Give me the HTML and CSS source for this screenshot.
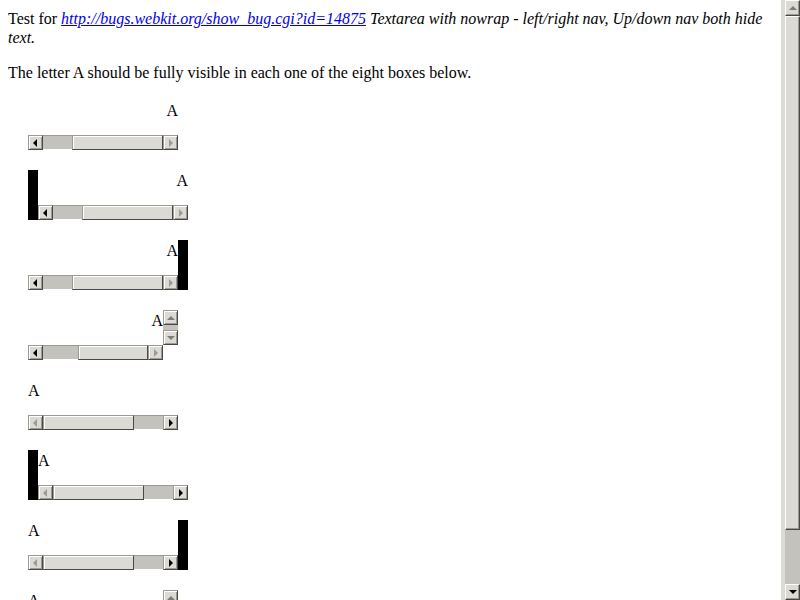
FILE: index.html
```html
<!DOCTYPE html>
<html>
<head>
<meta charset="utf-8">
<link rel="stylesheet" href="styles.css">
</head>
<body>
<p class="intro">Test for <em><a href="#">http://bugs.webkit.org/show_bug.cgi?id=14875</a> Textarea with nowrap - left/right nav, Up/down nav both hide text.</em></p>
<p>The letter A should be fully visible in each one of the eight boxes below.</p>

<div class="boxes">
  <div class="ta">
    <div class="txt end">A</div>
    <div class="hbar"><span class="btn"><span class="arr al"></span></span><span class="track"><span class="gap" style="flex:0 0 29px"></span><span class="thumb"></span></span><span class="btn"><span class="arr ar dis"></span></span></div>
  </div>

  <div class="ta bl">
    <div class="txt end">A</div>
    <div class="hbar"><span class="btn"><span class="arr al"></span></span><span class="track"><span class="gap" style="flex:0 0 29px"></span><span class="thumb"></span></span><span class="btn"><span class="arr ar dis"></span></span></div>
  </div>

  <div class="ta br">
    <div class="txt end">A</div>
    <div class="hbar"><span class="btn"><span class="arr al"></span></span><span class="track"><span class="gap" style="flex:0 0 29px"></span><span class="thumb"></span></span><span class="btn"><span class="arr ar dis"></span></span></div>
  </div>

  <div class="ta grid">
    <div class="txt end">A</div>
    <div class="vbar"><span class="btn"><span class="arr au"></span></span><span class="vtrack"></span><span class="btn"><span class="arr ad"></span></span></div>
    <div class="hbar"><span class="btn"><span class="arr al"></span></span><span class="track"><span class="gap" style="flex:0 0 35px"></span><span class="thumb"></span></span><span class="btn"><span class="arr ar dis"></span></span></div>
    <div class="corner"></div>
  </div>

  <div class="ta">
    <div class="txt">A</div>
    <div class="hbar"><span class="btn"><span class="arr al dis"></span></span><span class="track"><span class="thumb"></span><span class="gap" style="flex:0 0 29px"></span></span><span class="btn"><span class="arr ar"></span></span></div>
  </div>

  <div class="ta bl">
    <div class="txt">A</div>
    <div class="hbar"><span class="btn"><span class="arr al dis"></span></span><span class="track"><span class="thumb"></span><span class="gap" style="flex:0 0 29px"></span></span><span class="btn"><span class="arr ar"></span></span></div>
  </div>

  <div class="ta br">
    <div class="txt">A</div>
    <div class="hbar"><span class="btn"><span class="arr al dis"></span></span><span class="track"><span class="thumb"></span><span class="gap" style="flex:0 0 29px"></span></span><span class="btn"><span class="arr ar"></span></span></div>
  </div>

  <div class="ta grid">
    <div class="txt">A</div>
    <div class="vbar"><span class="btn"><span class="arr au"></span></span><span class="vtrack"></span><span class="btn"><span class="arr ad"></span></span></div>
    <div class="hbar"><span class="btn"><span class="arr al dis"></span></span><span class="track"><span class="thumb"></span><span class="gap" style="flex:0 0 35px"></span></span><span class="btn"><span class="arr ar"></span></span></div>
    <div class="corner"></div>
  </div>
</div>

<div class="pagebar">
  <span class="pbtn"><span class="arr pu"></span></span>
  <span class="pthumb"></span>
  <span class="ptrack"></span>
  <span class="pbtn"><span class="arr pd"></span></span>
</div>
</body>
</html>
```

FILE: styles.css
```css
html {
  overflow: hidden;
  background: #fff;
}
body {
  margin: 9px 8px 8px;
  width: 765px;
  font-family: "Liberation Serif", "Times New Roman", serif;
  font-size: 16px;
  color: #000;
}
p {
  margin: 16px 0;
  line-height: 19px;
}
p.intro {
  margin-top: 0;
}
a {
  color: #0000ee;
  text-decoration: underline;
}
.boxes {
  margin-top: 18px;
  padding-left: 20px;
  display: flex;
  flex-direction: column;
  align-items: flex-start;
  gap: 20px;
}
.ta {
  width: 150px;
  height: 50px;
  display: flex;
  flex-direction: column;
  background: #fff;
}
.ta.bl {
  border-left: 10px solid #000;
}
.ta.br {
  border-right: 10px solid #000;
}
.txt {
  flex: 1;
  display: flex;
  padding-top: 2px;
  line-height: 18px;
  white-space: nowrap;
  overflow: hidden;
}
.txt.end {
  justify-content: flex-end;
}
.ta.grid {
  display: grid;
  grid-template-columns: 1fr 15px;
  grid-template-rows: 35px 15px;
}
.hbar {
  display: flex;
  height: 15px;
  background: #c4c2bd;
}
.vbar {
  display: flex;
  flex-direction: column;
  width: 15px;
}
.vtrack {
  flex: 1;
  background: #c4c2bd;
}
.corner {
  background: #fff;
}
.btn {
  width: 15px;
  height: 15px;
  box-sizing: border-box;
  flex: 0 0 15px;
  background: #dcdad5;
  border: 1px solid;
  border-color: #9d9a94 #4a4845 #4a4845 #9d9a94;
  box-shadow: inset 1px 1px 0 #fff, inset -1px -1px 0 #9d9a94;
  display: flex;
  align-items: center;
  justify-content: center;
}
.track {
  flex: 1;
  display: flex;
  box-sizing: border-box;
  border-top: 1px solid #9d9a94;
  border-bottom: 1px solid #fff;
}
.gap {
  display: block;
}
.thumb {
  flex: 1;
  margin: -1px 0;
  background: #dcdad5;
  box-sizing: border-box;
  border: 1px solid;
  border-color: #9d9a94 #4a4845 #4a4845 #9d9a94;
  box-shadow: inset 1px 1px 0 #fff;
}
.arr {
  display: block;
  width: 0;
  height: 0;
  border: 0 solid transparent;
}
.al {
  border-width: 4px 4px 4px 0;
  border-right-color: #000;
  margin-left: -1px;
}
.ar {
  border-width: 4px 0 4px 4px;
  border-left-color: #000;
  margin-left: 1px;
}
.au {
  border-width: 0 4px 4px 4px;
  border-bottom-color: #7d7b76;
}
.ad {
  border-width: 4px 4px 0 4px;
  border-top-color: #7d7b76;
}
.pu {
  border-width: 0 4px 4px 4px;
  border-bottom-color: #7d7b76;
}
.pd {
  border-width: 4px 4px 0 4px;
  border-top-color: #000;
}
.al.dis {
  border-right-color: #9d9a94;
}
.ar.dis {
  border-left-color: #9d9a94;
}
.pagebar {
  position: fixed;
  top: 0;
  right: 0;
  width: 15px;
  height: 600px;
  border-left: 4px solid #dcdad5;
  display: flex;
  flex-direction: column;
  background: #c4c2bd;
}
.pbtn {
  flex: 0 0 16px;
  box-sizing: border-box;
  background: #dcdad5;
  border: 1px solid;
  border-color: #fff #4a4845 #4a4845 #fff;
  box-shadow: inset -1px -1px 0 #9d9a94;
  display: flex;
  align-items: center;
  justify-content: center;
}
.pthumb {
  flex: 0 0 514px;
  box-sizing: border-box;
  background: #dcdad5;
  border: 1px solid;
  border-color: #fff #4a4845 #4a4845 #fff;
  box-shadow: inset -1px -1px 0 #9d9a94;
}
.ptrack {
  flex: 1;
}
```
